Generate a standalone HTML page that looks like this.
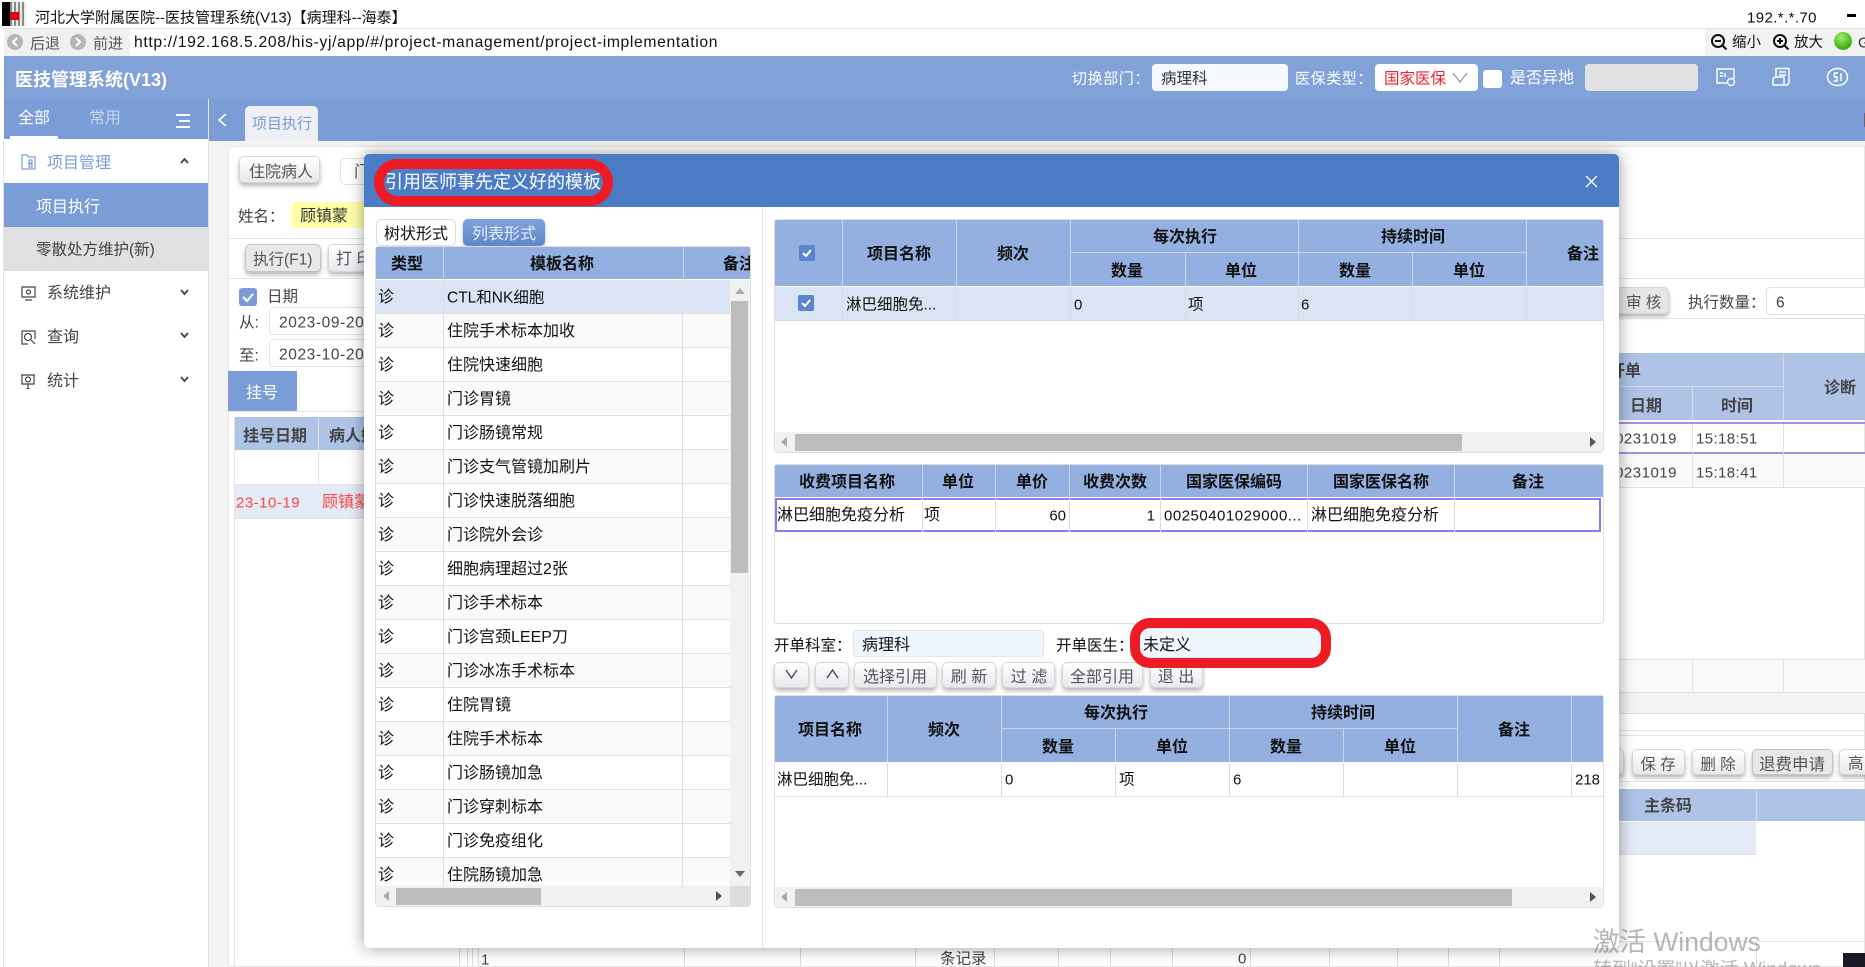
<!DOCTYPE html>
<html lang="zh-CN"><head><meta charset="utf-8"><title>医技管理系统</title>
<style>
*{box-sizing:border-box}
html,body{margin:0;padding:0;width:1865px;height:967px;overflow:hidden;background:#fff}
body{position:relative;font-family:"Liberation Sans","Noto Sans CJK SC",sans-serif;font-size:16px;color:#444}
div,span,svg,i,b{position:absolute;display:block}
i{font-style:normal;white-space:nowrap;line-height:1;transform:translateY(-50%);margin-top:1px}
i.c{transform:translate(-50%,-50%);margin-top:2px}
i.h{font-weight:bold;color:#111;margin-top:2px}
i.g{font-weight:bold;color:#444;margin-top:2px}
i.k{color:#111}
b.v{width:1px;background:#dcdcdc}
b.w{width:1px;background:#cdd6e6}
b.l{height:1px;background:#e3e3e3}
.btn{background:linear-gradient(#fff,#e7e9ef);border:1px solid #d6d6d6;border-radius:5px;box-shadow:0 3px 4px rgba(0,0,0,.28)}
.btn.p{background:#e8e8e8;border-color:#c4c4c4}
.inp{background:#fff;border:1px solid #e2e2e2;border-radius:5px}
.ib{background:#f0f6fe;border:1px solid #dde3ea;border-radius:4px}
.head{background:#93b0e0}
.sb{background:#f1f1f1}
.th{background:#bdbdbd}
.r{position:relative;height:34px;border-bottom:1px solid #e0e0e0;background:#fff;overflow:hidden}
.r:nth-child(even){background:#fafafa}
.r:first-child{background:#dae4f5}
.r i{top:17px}
.r b{top:0;height:34px;background:#dedede}
.tbx{border:1px solid #dedede;border-radius:4px;background:#fff}
</style></head><body>

<!-- title bar -->
<div style="left:2px;top:2px;width:24px;height:24px;background:repeating-linear-gradient(90deg,#888 0 2px,#eee 2px 4px)"></div>
<div style="left:2px;top:2px;width:8px;height:24px;background:#000"></div>
<div style="left:10px;top:12px;width:9px;height:8px;background:#e8000f"></div>
<i class="k" style="left:35px;top:17px;font-size:15px">河北大学附属医院--医技管理系统(V13)【病理科--海泰】</i>
<i class="k" style="left:1747px;top:17px;font-size:15px;letter-spacing:.4px">192.*.*.70</i>
<div style="left:1847px;top:14px;width:9px;height:3px;background:#000"></div>
<b class="l" style="left:0;top:28px;width:1865px;background:#e3e3e3"></b>

<!-- address bar -->
<div style="left:4px;top:29px;width:126px;height:27px;background:#f0f0f0"></div>
<div style="left:1705px;top:29px;width:160px;height:27px;background:#f2f2f2"></div>
<svg style="left:6px;top:32px" width="18" height="20"><circle cx="9" cy="10" r="8" fill="#b5b5b5"/><path d="M11 6l-4 4 4 4" stroke="#fff" stroke-width="2" fill="none"/></svg>
<i style="left:30px;top:43px;font-size:15px;color:#555">后退</i>
<svg style="left:69px;top:32px" width="18" height="20"><circle cx="9" cy="10" r="8" fill="#b5b5b5"/><path d="M7 6l4 4-4 4" stroke="#fff" stroke-width="2" fill="none"/></svg>
<i style="left:93px;top:43px;font-size:15px;color:#555">前进</i>
<i class="k" style="left:134px;top:42px;font-size:15.7px;letter-spacing:.65px">http://192.168.5.208/his-yj/app/#/project-management/project-implementation</i>
<svg style="left:1710px;top:33px" width="18" height="18" fill="none" stroke="#111" stroke-width="2"><circle cx="8" cy="8" r="6"/><path d="M5 8h6M12.5 12.5l4 4"/></svg>
<i class="k" style="left:1732px;top:42px;font-size:14.5px">缩小</i>
<svg style="left:1772px;top:33px" width="18" height="18" fill="none" stroke="#111" stroke-width="2"><circle cx="8" cy="8" r="6"/><path d="M5 8h6M8 5v6M12.5 12.5l4 4"/></svg>
<i class="k" style="left:1794px;top:42px;font-size:14.5px">放大</i>
<div style="left:1834px;top:32px;width:18px;height:18px;border-radius:50%;background:radial-gradient(circle at 40% 30%,#a5ec6a,#3fae16 70%,#2a8a0b)"></div>
<i style="left:1858px;top:42px;font-size:15px;color:#333">G</i>

<!-- header -->
<div style="left:4px;top:56px;width:1861px;height:43px;background:#81a2d9"></div>
<i style="left:15px;top:79px;font-size:18px;font-weight:bold;color:#fff">医技管理系统(V13)</i>
<i style="left:1072px;top:78px;font-size:15px;color:#fff;letter-spacing:.6px">切换部门：</i>
<div style="left:1152px;top:64px;width:136px;height:27px;background:#f5f9ff;border-radius:4px"></div>
<i style="left:1161px;top:78px;font-size:15.5px;color:#333">病理科</i>
<i style="left:1295px;top:78px;font-size:15px;color:#fff;letter-spacing:.6px">医保类型：</i>
<div style="left:1375px;top:64px;width:103px;height:27px;background:#fff;border-radius:4px"></div>
<i style="left:1384px;top:78px;font-size:15.5px;color:#f0202c">国家医保</i>
<svg style="left:1452px;top:72px" width="16" height="11" fill="none" stroke="#999" stroke-width="1.3"><path d="M1 1l7 9 7-9"/></svg>
<div style="left:1483px;top:70px;width:19px;height:18px;background:#fff;border-radius:3px"></div>
<i style="left:1510px;top:78px;font-size:16px;color:#fff">是否异地</i>
<div style="left:1585px;top:64px;width:113px;height:27px;background:#e2e2e2;border-radius:4px"></div>
<svg style="left:1715px;top:67px" width="22" height="20" fill="none" stroke="#fff" stroke-width="1.4"><path d="M12 16H2V2h17v10"/><circle cx="16" cy="15" r="3.5"/><path d="M5 6h3M5 9h3M10 6v4"/></svg>
<svg style="left:1771px;top:67px" width="20" height="20" fill="none" stroke="#fff" stroke-width="1.4"><path d="M5 10V1.500h13V15a3 3 0 0 1-3 3H2v-5a3 3 0 0 1 3-3h8v8M8 5h7M8 8h7"/></svg>
<svg style="left:1826px;top:67px" width="23" height="20" fill="none" stroke="#fff" stroke-width="1.5"><ellipse cx="11.500" cy="10" rx="10" ry="8.500"/><path d="M12 6H8.500v4H11v4H7.500M15 6v8"/></svg>

<!-- tab strip -->
<div style="left:4px;top:99px;width:204px;height:40px;background:#7a9dd7"></div>
<div style="left:209px;top:99px;width:1656px;height:42px;background:#7a9dd7"></div>
<i style="left:18px;top:118px;font-size:16px;color:#fff">全部</i>
<div style="left:10px;top:136px;width:48px;height:3px;background:#fff"></div>
<i style="left:89px;top:118px;font-size:16px;color:#c7d5ee">常用</i>
<svg style="left:176px;top:114px" width="14" height="14" fill="#fff"><rect width="14" height="2"/><rect x="3" y="6" width="11" height="2"/><rect y="12" width="14" height="2"/></svg>
<svg style="left:217px;top:113px" width="10" height="14" fill="none" stroke="#fff" stroke-width="1.500"><path d="M9 1L2 7l7 6"/></svg>
<div style="left:245px;top:106px;width:73px;height:35px;background:#eef0f5;border-radius:5px 5px 0 0"></div>
<i style="left:252px;top:123px;font-size:15px;color:#7a9dd7">项目执行</i>
<b class="v" style="left:1864px;top:113px;height:14px;background:#667"></b>

<!-- sidebar -->
<div style="left:3px;top:139px;width:1px;height:828px;background:#e4e4e4"></div>
<div style="left:208px;top:99px;width:1px;height:868px;background:#e4e4e4"></div>
<div style="left:209px;top:141px;width:1656px;height:826px;background:#f3f3f3"></div>
<svg style="left:21px;top:154px" width="15" height="16" fill="none" stroke="#7a9dd7" stroke-width="1.200"><path d="M1 1h5l1.500 2H14v12H1zM8 6h3v3H8zM8 10h3v3H8z"/></svg>
<i style="left:47px;top:162px;font-size:16px;color:#7a9dd7;margin-top:2px">项目管理</i>
<svg style="left:180px;top:157px" width="9" height="7" fill="none" stroke="#444" stroke-width="1.800"><path d="M1 6l3.500-4L8 6"/></svg>
<div style="left:4px;top:183px;width:204px;height:44px;background:#7a9dd7"></div>
<i style="left:36px;top:206px;font-size:16px;color:#fff;margin-top:2px">项目执行</i>
<div style="left:4px;top:227px;width:204px;height:44px;background:#e0e0e0"></div>
<i style="left:36px;top:249px;font-size:15.500px;color:#444">零散处方维护(新)</i>
<svg style="left:21px;top:286px" width="15" height="15" fill="none" stroke="#444" stroke-width="1.200"><path d="M1 1h13v10H1zM4 14h7"/><circle cx="7.500" cy="6" r="2"/></svg>
<i style="left:47px;top:293px;font-size:16px">系统维护</i>
<svg style="left:180px;top:289px" width="9" height="7" fill="none" stroke="#444" stroke-width="1.800"><path d="M1 1l3.500 4L8 1"/></svg>
<svg style="left:21px;top:330px" width="15" height="15" fill="none" stroke="#444" stroke-width="1.200"><path d="M7 14H1V1h13v8"/><circle cx="7" cy="7" r="3.500"/><path d="M10 10l4 4"/></svg>
<i style="left:47px;top:337px;font-size:16px">查询</i>
<svg style="left:180px;top:332px" width="9" height="7" fill="none" stroke="#444" stroke-width="1.800"><path d="M1 1l3.500 4L8 1"/></svg>
<svg style="left:20px;top:373px" width="16" height="16" fill="none" stroke="#444" stroke-width="1.200"><path d="M1 2h14M2 2v9h12V2M8 11v5M6 16h4"/><circle cx="8" cy="6.500" r="2.500"/></svg>
<i style="left:47px;top:381px;font-size:16px">统计</i>
<svg style="left:180px;top:376px" width="9" height="7" fill="none" stroke="#444" stroke-width="1.800"><path d="M1 1l3.500 4L8 1"/></svg>

<!-- main panel -->
<div style="left:228px;top:146px;width:1637px;height:821px;background:#fff;border:1px solid #e6e6e6;border-radius:5px 0 0 0"></div>
<div class="btn" style="left:239px;top:156px;width:81px;height:27px"></div>
<i style="left:249px;top:171px;font-size:16px;color:#555;margin-top:2px">住院病人</i>
<div class="inp" style="left:340px;top:158px;width:60px;height:27px"></div>
<i style="left:354px;top:171px;font-size:16px;color:#555;margin-top:2px">门</i>
<i style="left:238px;top:216px;font-size:15.500px">姓名：</i>
<div style="left:291px;top:202px;width:90px;height:26px;background:#ffffa8;border-radius:4px"></div>
<i style="left:300px;top:216px;font-size:16px;color:#333">顾镇蒙</i>
<b class="l" style="left:229px;top:238px;width:1636px"></b>
<div class="btn p" style="left:245px;top:244px;width:76px;height:28px"></div>
<i style="left:253px;top:259px;font-size:15.500px;color:#555">执行(F1)</i>
<div class="btn" style="left:328px;top:244px;width:60px;height:28px"></div>
<i style="left:336px;top:259px;font-size:16px;color:#555">打 印</i>
<b class="l" style="left:229px;top:278px;width:1636px"></b>
<div style="left:239px;top:288px;width:18px;height:18px;background:#7a9dd7;border-radius:3px"></div>
<svg style="left:239px;top:288px" width="18" height="18" fill="none" stroke="#fff" stroke-width="2"><path d="M4 9l4 4 6-7"/></svg>
<i style="left:267px;top:296px;font-size:15.500px">日期</i>
<i style="left:239px;top:322px;font-size:15.500px">从:</i>
<div class="inp" style="left:269px;top:307px;width:120px;height:28px"></div>
<i style="left:279px;top:322px;font-size:15.500px;letter-spacing:.6px">2023-09-20</i>
<i style="left:239px;top:355px;font-size:15.500px">至:</i>
<div class="inp" style="left:269px;top:339px;width:120px;height:28px"></div>
<i style="left:279px;top:354px;font-size:15.500px;letter-spacing:.6px">2023-10-20</i>
<div style="left:228px;top:371px;width:69px;height:40px;background:#7a9dd7"></div>
<i class="c" style="left:262px;top:392px;font-size:16px;color:#fff">挂号</i>
<b class="l" style="left:229px;top:411px;width:200px"></b>
<div style="left:234px;top:417px;width:140px;height:33px;background:#aec3e6"></div>
<b class="v" style="left:234px;top:417px;height:550px;background:#e3e3e3"></b>
<b class="v" style="left:318px;top:417px;height:101px;background:#e3e3e3"></b>
<i class="g" style="left:243px;top:435px;font-size:16px">挂号日期</i>
<i class="g" style="left:329px;top:435px;font-size:16px">病人姓名</i>
<b class="l" style="left:234px;top:484px;width:140px"></b>
<div style="left:235px;top:485px;width:140px;height:33px;background:#e4eaf6"></div>
<i style="left:236px;top:502px;font-size:15px;letter-spacing:.5px;color:#f44">23-10-19</i>
<i style="left:322px;top:502px;font-size:16px;color:#f44">顾镇蒙</i>
<b class="l" style="left:234px;top:518px;width:140px"></b>

<!-- right of the modal -->
<div class="btn" style="left:1600px;top:287px;width:69px;height:27px;background:#e6e6e6"></div>
<i style="left:1626px;top:302px;font-size:15.500px;color:#555">审 核</i>
<i style="left:1688px;top:302px;font-size:15.500px">执行数量：</i>
<div class="inp" style="left:1766px;top:287px;width:110px;height:28px"></div>
<i style="left:1776px;top:302px;font-size:15.500px">6</i>
<b class="l" style="left:1619px;top:318px;width:246px"></b>
<div style="left:1600px;top:353px;width:265px;height:67px;background:#aec3e6"></div>
<b class="w" style="left:1600px;top:386px;width:183px;height:1px;background:#d5dce8"></b>
<b class="w" style="left:1692px;top:387px;height:33px;background:#d5dce8"></b>
<b class="w" style="left:1783px;top:353px;height:67px;background:#d5dce8"></b>
<i class="g" style="left:1609px;top:370px;font-size:16px">开单</i>
<i class="g c" style="left:1646px;top:405px;font-size:16px">日期</i>
<i class="g c" style="left:1737px;top:405px;font-size:16px">时间</i>
<i class="g c" style="left:1840px;top:387px;font-size:16px">诊断</i>
<div style="left:1600px;top:422px;width:265px;height:2px;background:#a78de8"></div>
<div style="left:1600px;top:452px;width:265px;height:2px;background:#a78de8"></div>
<div style="left:1600px;top:454px;width:265px;height:34px;background:#fafafa;border-bottom:1px solid #e0e0e0"></div>
<b class="v" style="left:1692px;top:424px;height:64px;background:#e0e0e0"></b>
<b class="v" style="left:1783px;top:424px;height:64px;background:#e0e0e0"></b>
<i style="left:1620px;top:438px;font-size:15px;letter-spacing:.5px;width:57px;direction:rtl;overflow:hidden">0231019</i>
<i style="left:1696px;top:438px;font-size:15px;letter-spacing:.4px">15:18:51</i>
<i style="left:1620px;top:472px;font-size:15px;letter-spacing:.5px;width:57px;direction:rtl;overflow:hidden">0231019</i>
<i style="left:1696px;top:472px;font-size:15px;letter-spacing:.4px">15:18:41</i>

<div style="left:1619px;top:659px;width:246px;height:34px;background:#fafafa;border-top:1px solid #e0e0e0;border-bottom:1px solid #e0e0e0"></div>
<b class="v" style="left:1692px;top:659px;height:34px;background:#e0e0e0"></b>
<b class="v" style="left:1783px;top:659px;height:34px;background:#e0e0e0"></b>
<div style="left:1619px;top:693px;width:246px;height:21px;background:#f3f3f3;border-bottom:1px solid #e0e0e0"></div>
<b class="l" style="left:1619px;top:730px;width:246px"></b>
<b class="l" style="left:1619px;top:735px;width:246px"></b>
<div class="btn" style="left:1590px;top:749px;width:34px;height:26px"></div>
<div class="btn" style="left:1632px;top:749px;width:53px;height:26px"></div>
<i class="c" style="left:1658px;top:763px;font-size:15.500px;color:#555">保 存</i>
<div class="btn" style="left:1692px;top:749px;width:53px;height:26px"></div>
<i class="c" style="left:1718px;top:763px;font-size:15.500px;color:#555">删 除</i>
<div class="btn p" style="left:1752px;top:749px;width:81px;height:26px"></div>
<i class="c" style="left:1792px;top:763px;font-size:16.500px;color:#555">退费申请</i>
<div class="btn" style="left:1839px;top:749px;width:60px;height:26px"></div>
<i style="left:1848px;top:763px;font-size:15.500px;color:#555">高</i>
<b class="l" style="left:1619px;top:781px;width:246px"></b>
<div style="left:1600px;top:789px;width:265px;height:32px;background:#aec3e6"></div>
<b class="w" style="left:1756px;top:789px;height:32px;background:#d5dce8"></b>
<i class="g c" style="left:1668px;top:805px;font-size:16px">主条码</i>
<div style="left:1600px;top:822px;width:156px;height:33px;background:#e4eaf6;border-bottom:1px solid #e0e0e0"></div>

<!-- bottom row behind the modal -->
<b class="l" style="left:1619px;top:941px;width:246px"></b>
<b class="v" style="left:459px;top:941px;height:26px"></b><b class="v" style="left:467px;top:941px;height:26px"></b><b class="v" style="left:472px;top:941px;height:26px"></b><b class="v" style="left:478px;top:941px;height:26px"></b><b class="v" style="left:684px;top:941px;height:26px"></b><b class="v" style="left:800px;top:941px;height:26px"></b><b class="v" style="left:915px;top:941px;height:26px"></b><b class="v" style="left:994px;top:941px;height:26px"></b><b class="v" style="left:1058px;top:941px;height:26px"></b><b class="v" style="left:1110px;top:941px;height:26px"></b><b class="v" style="left:1172px;top:941px;height:26px"></b><b class="v" style="left:1250px;top:941px;height:26px"></b><b class="v" style="left:1329px;top:941px;height:26px"></b><b class="v" style="left:1397px;top:941px;height:26px"></b><b class="v" style="left:1448px;top:941px;height:26px"></b><b class="v" style="left:1499px;top:941px;height:26px"></b><b class="v" style="left:1756px;top:941px;height:26px"></b>
<i style="left:481px;top:959px;font-size:15px">1</i>
<i style="left:940px;top:958px;font-size:15.500px">条记录</i>
<i style="left:1238px;top:958px;font-size:15px">0</i>

<!-- modal -->
<div style="left:364px;top:154px;width:1255px;height:794px;background:#fff;border-radius:5px;box-shadow:0 0 16px rgba(0,0,0,.4);overflow:hidden">
 <div style="left:0;top:0;width:1255px;height:53px;background:#4d7cc7"></div>
</div>
<div style="left:374px;top:159px;width:239px;height:47px;border:10px solid #ed1c24;border-radius:24px"></div>
<i style="left:385px;top:181px;font-size:18px;color:#fff">引用医师事先定义好的模板</i>
<svg style="left:1585px;top:175px" width="13" height="13" fill="none" stroke="#fff" stroke-width="1.300"><path d="M1 1l11 11M12 1L1 12"/></svg>
<b class="v" style="left:762px;top:207px;height:741px;background:#e6e6e6"></b>

<!-- left pane -->
<div class="inp" style="left:376px;top:219px;width:80px;height:27px;border-color:#ddd"></div>
<i style="left:384px;top:233px;font-size:16px;color:#111;margin-top:2px">树状形式</i>
<div style="left:463px;top:219px;width:82px;height:27px;border-radius:5px;background:linear-gradient(#7fa1da,#5f87c9);box-shadow:0 1px 3px rgba(80,120,200,.5)"></div>
<i style="left:472px;top:233px;font-size:16px;color:#e6edf9;margin-top:2px">列表形式</i>
<div class="tbx" style="left:375px;top:246px;width:376px;height:661px"></div>
<div class="head" style="left:376px;top:247px;width:374px;height:32px"></div>
<b class="w" style="left:443px;top:247px;height:32px"></b>
<b class="w" style="left:683px;top:247px;height:32px"></b>
<i class="h c" style="left:407px;top:263px;font-size:16px">类型</i>
<i class="h c" style="left:562px;top:263px;font-size:16px">模板名称</i>
<span style="left:684px;top:247px;width:66px;height:32px;overflow:hidden"><i class="h" style="left:39px;top:16px;font-size:16px">备注</i></span>
<div style="left:376px;top:280px;width:354px;height:606px;overflow:hidden;color:#111">
<div class="r"><i style="left:2px">诊</i><b style="left:67px;width:1px"></b><i style="left:71px;font-size:15.500px">CTL和NK细胞</i><b style="left:306px;width:1px"></b></div>
<div class="r"><i style="left:2px">诊</i><b style="left:67px;width:1px"></b><i style="left:71px">住院手术标本加收</i><b style="left:306px;width:1px"></b></div>
<div class="r"><i style="left:2px">诊</i><b style="left:67px;width:1px"></b><i style="left:71px">住院快速细胞</i><b style="left:306px;width:1px"></b></div>
<div class="r"><i style="left:2px">诊</i><b style="left:67px;width:1px"></b><i style="left:71px">门诊胃镜</i><b style="left:306px;width:1px"></b></div>
<div class="r"><i style="left:2px">诊</i><b style="left:67px;width:1px"></b><i style="left:71px">门诊肠镜常规</i><b style="left:306px;width:1px"></b></div>
<div class="r"><i style="left:2px">诊</i><b style="left:67px;width:1px"></b><i style="left:71px">门诊支气管镜加刷片</i><b style="left:306px;width:1px"></b></div>
<div class="r"><i style="left:2px">诊</i><b style="left:67px;width:1px"></b><i style="left:71px">门诊快速脱落细胞</i><b style="left:306px;width:1px"></b></div>
<div class="r"><i style="left:2px">诊</i><b style="left:67px;width:1px"></b><i style="left:71px">门诊院外会诊</i><b style="left:306px;width:1px"></b></div>
<div class="r"><i style="left:2px">诊</i><b style="left:67px;width:1px"></b><i style="left:71px">细胞病理超过2张</i><b style="left:306px;width:1px"></b></div>
<div class="r"><i style="left:2px">诊</i><b style="left:67px;width:1px"></b><i style="left:71px">门诊手术标本</i><b style="left:306px;width:1px"></b></div>
<div class="r"><i style="left:2px">诊</i><b style="left:67px;width:1px"></b><i style="left:71px">门诊宫颈LEEP刀</i><b style="left:306px;width:1px"></b></div>
<div class="r"><i style="left:2px">诊</i><b style="left:67px;width:1px"></b><i style="left:71px">门诊冰冻手术标本</i><b style="left:306px;width:1px"></b></div>
<div class="r"><i style="left:2px">诊</i><b style="left:67px;width:1px"></b><i style="left:71px">住院胃镜</i><b style="left:306px;width:1px"></b></div>
<div class="r"><i style="left:2px">诊</i><b style="left:67px;width:1px"></b><i style="left:71px">住院手术标本</i><b style="left:306px;width:1px"></b></div>
<div class="r"><i style="left:2px">诊</i><b style="left:67px;width:1px"></b><i style="left:71px">门诊肠镜加急</i><b style="left:306px;width:1px"></b></div>
<div class="r"><i style="left:2px">诊</i><b style="left:67px;width:1px"></b><i style="left:71px">门诊穿刺标本</i><b style="left:306px;width:1px"></b></div>
<div class="r"><i style="left:2px">诊</i><b style="left:67px;width:1px"></b><i style="left:71px">门诊免疫组化</i><b style="left:306px;width:1px"></b></div>
<div class="r"><i style="left:2px">诊</i><b style="left:67px;width:1px"></b><i style="left:71px">住院肠镜加急</i><b style="left:306px;width:1px"></b></div>
</div>
<div class="sb" style="left:730px;top:280px;width:20px;height:606px"></div>
<div class="th" style="left:731px;top:301px;width:17px;height:272px"></div>
<svg style="left:735px;top:288px" width="10" height="6" fill="#aaa"><path d="M0 6L5 0l5 6z"/></svg>
<svg style="left:735px;top:871px" width="10" height="6" fill="#666"><path d="M0 0l5 6 5-6z"/></svg>
<div class="sb" style="left:376px;top:886px;width:354px;height:20px"></div>
<div style="left:730px;top:886px;width:20px;height:20px;background:#dcdcdc"></div>
<div class="th" style="left:396px;top:888px;width:145px;height:17px"></div>
<svg style="left:383px;top:891px" width="6" height="10" fill="#aaa"><path d="M6 0L0 5l6 5z"/></svg>
<svg style="left:716px;top:891px" width="6" height="10" fill="#555"><path d="M0 0l6 5-6 5z"/></svg>

<!-- right table 1 -->
<div class="tbx" style="left:774px;top:219px;width:830px;height:234px"></div>
<div class="head" style="left:775px;top:220px;width:828px;height:66px"></div>
<b class="w" style="left:842px;top:220px;height:66px"></b>
<b class="w" style="left:956px;top:220px;height:66px"></b>
<b class="w" style="left:1070px;top:220px;height:66px"></b>
<b class="w" style="left:1185px;top:252px;height:34px"></b>
<b class="w" style="left:1298px;top:220px;height:66px"></b>
<b class="w" style="left:1412px;top:252px;height:34px"></b>
<b class="w" style="left:1526px;top:220px;height:66px"></b>
<b class="w" style="left:1070px;top:252px;width:456px;height:1px"></b>
<div style="left:799px;top:245px;width:16px;height:16px;background:#5b86cf;border-radius:2px"></div>
<svg style="left:799px;top:245px" width="16" height="16" fill="none" stroke="#fff" stroke-width="2"><path d="M4 8l3 3 5-6"/></svg>
<i class="h c" style="left:899px;top:253px;font-size:16px">项目名称</i>
<i class="h c" style="left:1013px;top:253px;font-size:16px">频次</i>
<i class="h c" style="left:1185px;top:236px;font-size:16px">每次执行</i>
<i class="h c" style="left:1413px;top:236px;font-size:16px">持续时间</i>
<i class="h c" style="left:1127px;top:270px;font-size:16px">数量</i>
<i class="h c" style="left:1241px;top:270px;font-size:16px">单位</i>
<i class="h c" style="left:1355px;top:270px;font-size:16px">数量</i>
<i class="h c" style="left:1469px;top:270px;font-size:16px">单位</i>
<i class="h c" style="left:1583px;top:253px;font-size:16px">备注</i>
<div style="left:775px;top:287px;width:828px;height:34px;background:#dae4f5;border-bottom:1px solid #d5d9e0"></div>
<b class="v" style="left:842px;top:287px;height:33px"></b><b class="v" style="left:956px;top:287px;height:33px"></b><b class="v" style="left:1070px;top:287px;height:33px"></b><b class="v" style="left:1185px;top:287px;height:33px"></b><b class="v" style="left:1298px;top:287px;height:33px"></b><b class="v" style="left:1412px;top:287px;height:33px"></b><b class="v" style="left:1526px;top:287px;height:33px"></b>
<div style="left:798px;top:295px;width:16px;height:16px;background:#5b86cf;border-radius:2px"></div>
<svg style="left:798px;top:295px" width="16" height="16" fill="none" stroke="#fff" stroke-width="2"><path d="M4 8l3 3 5-6"/></svg>
<i class="k" style="left:846px;top:304px;font-size:15.500px">淋巴细胞免...</i>
<i class="k" style="left:1074px;top:304px;font-size:15px">0</i>
<i class="k" style="left:1188px;top:304px;font-size:15.500px">项</i>
<i class="k" style="left:1301px;top:304px;font-size:15px">6</i>
<div class="sb" style="left:775px;top:432px;width:828px;height:20px"></div>
<div class="th" style="left:795px;top:434px;width:667px;height:17px"></div>
<svg style="left:781px;top:437px" width="6" height="10" fill="#aaa"><path d="M6 0L0 5l6 5z"/></svg>
<svg style="left:1590px;top:437px" width="6" height="10" fill="#555"><path d="M0 0l6 5-6 5z"/></svg>

<!-- right table 2 -->
<div class="tbx" style="left:774px;top:464px;width:830px;height:160px"></div>
<div class="head" style="left:775px;top:465px;width:828px;height:32px"></div>
<b class="w" style="left:922px;top:465px;height:32px"></b><b class="w" style="left:995px;top:465px;height:32px"></b><b class="w" style="left:1069px;top:465px;height:32px"></b><b class="w" style="left:1160px;top:465px;height:32px"></b><b class="w" style="left:1307px;top:465px;height:32px"></b><b class="w" style="left:1454px;top:465px;height:32px"></b>
<i class="h c" style="left:847px;top:481px;font-size:16px">收费项目名称</i>
<i class="h c" style="left:958px;top:481px;font-size:16px">单位</i>
<i class="h c" style="left:1032px;top:481px;font-size:16px">单价</i>
<i class="h c" style="left:1115px;top:481px;font-size:16px">收费次数</i>
<i class="h c" style="left:1234px;top:481px;font-size:16px">国家医保编码</i>
<i class="h c" style="left:1381px;top:481px;font-size:16px">国家医保名称</i>
<i class="h c" style="left:1528px;top:481px;font-size:16px">备注</i>
<div style="left:775px;top:498px;width:826px;height:34px;border:2px solid #8d78f0;background:#fff"></div>
<b class="v" style="left:922px;top:498px;height:34px"></b><b class="v" style="left:995px;top:498px;height:34px"></b><b class="v" style="left:1069px;top:498px;height:34px"></b><b class="v" style="left:1160px;top:498px;height:34px"></b><b class="v" style="left:1307px;top:498px;height:34px"></b><b class="v" style="left:1454px;top:498px;height:34px"></b>
<i class="k" style="left:777px;top:515px;font-size:16px">淋巴细胞免疫分析</i>
<i class="k" style="left:924px;top:515px;font-size:16px">项</i>
<i class="k" style="right:799px;top:515px;font-size:15px">60</i>
<i class="k" style="right:710px;top:515px;font-size:15px">1</i>
<i class="k" style="left:1164px;top:515px;font-size:15px;letter-spacing:.5px">00250401029000...</i>
<i class="k" style="left:1311px;top:515px;font-size:16px">淋巴细胞免疫分析</i>

<!-- form -->
<i class="k" style="left:774px;top:644px;font-size:15.500px;margin-top:2px">开单科室：</i>
<div class="ib" style="left:853px;top:630px;width:191px;height:27px"></div>
<i class="k" style="left:862px;top:644px;font-size:16px;margin-top:2px">病理科</i>
<i class="k" style="left:1056px;top:644px;font-size:15.500px;margin-top:2px">开单医生：</i>
<div class="btn" style="left:774px;top:662px;width:35px;height:26px"></div>
<svg style="left:785px;top:669px" width="13" height="10" fill="none" stroke="#444" stroke-width="1.300"><path d="M1 1l5.500 8L12 1"/></svg>
<div class="btn" style="left:815px;top:662px;width:34px;height:26px"></div>
<svg style="left:826px;top:669px" width="13" height="10" fill="none" stroke="#444" stroke-width="1.300"><path d="M1 9l5.500-8L12 9"/></svg>
<div class="btn" style="left:854px;top:662px;width:83px;height:26px"></div>
<i class="c" style="left:895px;top:676px;font-size:16px;color:#555">选择引用</i>
<div class="btn" style="left:942px;top:662px;width:54px;height:26px"></div>
<i class="c" style="left:969px;top:676px;font-size:16px;color:#555">刷 新</i>
<div class="btn" style="left:1002px;top:662px;width:53px;height:26px"></div>
<i class="c" style="left:1029px;top:676px;font-size:16px;color:#555">过 滤</i>
<div class="btn" style="left:1062px;top:662px;width:81px;height:26px"></div>
<i class="c" style="left:1102px;top:676px;font-size:16px;color:#555">全部引用</i>
<div class="btn" style="left:1150px;top:662px;width:53px;height:26px"></div>
<i class="c" style="left:1176px;top:676px;font-size:16px;color:#555">退 出</i>
<div class="ib" style="left:1138px;top:628px;width:186px;height:30px"></div>
<div style="left:1130px;top:618px;width:201px;height:50px;border:10px solid #ed1c24;border-radius:20px"></div>
<i class="k" style="left:1143px;top:644px;font-size:16px;margin-top:2px">未定义</i>

<!-- right table 3 -->
<div class="tbx" style="left:774px;top:695px;width:830px;height:213px"></div>
<div class="head" style="left:775px;top:696px;width:828px;height:66px"></div>
<b class="w" style="left:887px;top:696px;height:66px"></b><b class="w" style="left:1001px;top:696px;height:66px"></b><b class="w" style="left:1115px;top:728px;height:34px"></b><b class="w" style="left:1229px;top:696px;height:66px"></b><b class="w" style="left:1343px;top:728px;height:34px"></b><b class="w" style="left:1457px;top:696px;height:66px"></b><b class="w" style="left:1571px;top:696px;height:66px"></b>
<b class="w" style="left:1001px;top:728px;width:456px;height:1px"></b>
<i class="h c" style="left:830px;top:729px;font-size:16px">项目名称</i>
<i class="h c" style="left:944px;top:729px;font-size:16px">频次</i>
<i class="h c" style="left:1116px;top:712px;font-size:16px">每次执行</i>
<i class="h c" style="left:1343px;top:712px;font-size:16px">持续时间</i>
<i class="h c" style="left:1058px;top:746px;font-size:16px">数量</i>
<i class="h c" style="left:1172px;top:746px;font-size:16px">单位</i>
<i class="h c" style="left:1286px;top:746px;font-size:16px">数量</i>
<i class="h c" style="left:1400px;top:746px;font-size:16px">单位</i>
<i class="h c" style="left:1514px;top:729px;font-size:16px">备注</i>
<div style="left:775px;top:763px;width:828px;height:34px;background:#fff;border-bottom:1px solid #e0e0e0"></div>
<b class="v" style="left:887px;top:763px;height:33px"></b><b class="v" style="left:1001px;top:763px;height:33px"></b><b class="v" style="left:1115px;top:763px;height:33px"></b><b class="v" style="left:1229px;top:763px;height:33px"></b><b class="v" style="left:1343px;top:763px;height:33px"></b><b class="v" style="left:1457px;top:763px;height:33px"></b><b class="v" style="left:1571px;top:763px;height:33px"></b>
<i class="k" style="left:777px;top:779px;font-size:15.500px">淋巴细胞免...</i>
<i class="k" style="left:1005px;top:779px;font-size:15px">0</i>
<i class="k" style="left:1119px;top:779px;font-size:15.500px">项</i>
<i class="k" style="left:1233px;top:779px;font-size:15px">6</i>
<i class="k" style="left:1575px;top:779px;font-size:15px">218</i>
<div class="sb" style="left:775px;top:887px;width:828px;height:20px"></div>
<div class="th" style="left:795px;top:889px;width:717px;height:17px"></div>
<svg style="left:781px;top:892px" width="6" height="10" fill="#aaa"><path d="M6 0L0 5l6 5z"/></svg>
<svg style="left:1590px;top:892px" width="6" height="10" fill="#555"><path d="M0 0l6 5-6 5z"/></svg>

<!-- watermark -->
<i style="left:1593px;top:941px;font-size:26.500px;color:rgba(110,110,110,.5)">激活 Windows</i>
<i style="left:1593px;top:969px;font-size:19px;color:rgba(110,110,110,.5)">转到“设置”以激活 Windows。</i>
<div style="left:1843px;top:953px;width:22px;height:14px;background:#1a1a26"></div>
</body></html>
